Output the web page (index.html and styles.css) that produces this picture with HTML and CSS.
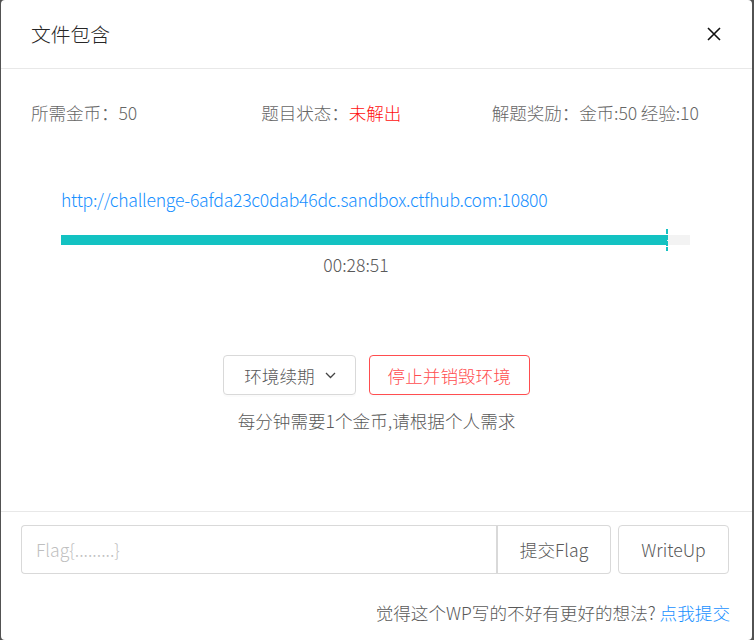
FILE: index.html
```html
<!DOCTYPE html>
<html lang="zh">
<head>
<meta charset="utf-8">
<title>文件包含</title>
<link rel="stylesheet" href="styles.css">
</head>
<body>
<div class="modal">
  <div class="modal-header">
    <div class="modal-title">文件包含</div>
    <svg class="close" width="14" height="14" viewBox="0 0 14 14"><path d="M1 1L13 13M13 1L1 13" stroke="#111" stroke-width="1.6" fill="none"/></svg>
  </div>
  <div class="modal-body">
    <div class="info">
      <div class="info-col">所需金币：50</div>
      <div class="info-col">题目状态：<span class="red">未解出</span></div>
      <div class="info-col">解题奖励：金币:50 经验:10</div>
    </div>
    <div class="url">http://challenge-6afda23c0dab46dc.sandbox.ctfhub.com:10800</div>
    <div class="progress">
      <div class="track">
        <div class="fill" style="width: 96.4%"></div>
        <div class="marker" style="left: 96.4%"></div>
      </div>
    </div>
    <div class="time">00:28:51</div>
    <div class="actions">
      <button class="btn">环境续期 <svg class="chev" width="11" height="7" viewBox="0 0 11 7"><path d="M1 1L5.5 5.5L10 1" stroke="#444" stroke-width="1.3" fill="none"/></svg></button>
      <button class="btn btn-danger">停止并销毁环境</button>
    </div>
    <div class="note">每分钟需要1个金币,请根据个人需求</div>
  </div>
  <div class="modal-footer">
    <div class="flag-row">
      <div class="input-group">
        <div class="input">Flag{.........}</div>
        <div class="addon">提交Flag</div>
      </div>
      <div class="btn-wu">WriteUp</div>
    </div>
    <div class="feedback">觉得这个WP写的不好有更好的想法? <span class="link">点我提交</span></div>
  </div>
</div>
</body>
</html>
```

FILE: styles.css
```css
html, body {
  margin: 0;
  padding: 0;
}
body {
  background: #525252;
  width: 754px;
  height: 640px;
  overflow: hidden;
  font-family: "Noto Sans CJK SC", "Noto Sans", sans-serif;
  font-size: 17.6px;
  font-weight: 300;
  color: #666;
}
.modal {
  margin-left: 1px;
  width: 751px;
  height: 640px;
  background: #fff;
  border-radius: 4px;
  display: flex;
  flex-direction: column;
}
.modal-header {
  height: 68px;
  border-bottom: 1px solid #e8e8e8;
  display: flex;
  align-items: center;
  justify-content: space-between;
  padding: 0 30px 0 30px;
  box-sizing: content-box;
}
.modal-title {
  font-size: 19.8px;
  color: #262626;
  line-height: 28px;
}
.close {
  display: block;
  margin-right: 1px;
}
.modal-body {
  height: 442px;
  padding-top: 31px;
  box-sizing: border-box;
}
.info {
  display: grid;
  grid-template-columns: repeat(3, 1fr);
  padding: 0 30px;
  line-height: 26px;
  letter-spacing: -0.1px;
}
.red {
  color: #ff1010;
}
.url {
  margin-top: 61px;
  padding-left: 60px;
  line-height: 26px;
  color: #1890ff;
  letter-spacing: -0.26px;
}
.progress {
  margin-top: 22px;
  padding: 0 62px 0 60px;
  height: 10px;
}
.track {
  position: relative;
  height: 10px;
  background: #f3f3f3;
}
.fill {
  height: 10px;
  background: #13c2c2;
}
.marker {
  position: absolute;
  top: -6px;
  width: 2px;
  height: 22px;
  margin-left: -1px;
  background: repeating-linear-gradient(#13c2c2 0 5px, transparent 5px 6px, #13c2c2 6px);
}
.time {
  margin-top: 7px;
  padding: 0 101px 0 60px;
  text-align: center;
  line-height: 26px;
  color: #595959;
}
.actions {
  margin-top: 77px;
  display: flex;
  justify-content: center;
  gap: 13px;
}
.btn {
  font: inherit;
  height: 40px;
  box-sizing: border-box;
  background: #fff;
  border: 1px solid #d9d9d9;
  border-radius: 4px;
  color: #595959;
  padding: 0 19px 0 20px;
  display: flex;
  align-items: center;
  box-shadow: 0 2px 0 rgba(0,0,0,0.015);
}
.chev {
  margin-left: 10px;
}
.btn-danger {
  border-color: #ff4d4f;
  color: #ff4d4f;
  padding: 0 18px;
}
.note {
  margin-top: 13px;
  text-align: center;
  line-height: 26px;
  color: #595959;
}
.modal-footer {
  border-top: 1px solid #e8e8e8;
  padding: 13px 22px 0 20px;
  flex: 1;
}
.flag-row {
  display: flex;
  gap: 7px;
}
.input-group {
  display: flex;
  width: 590px;
  height: 49px;
}
.input {
  flex: 1;
  border: 1px solid #d9d9d9;
  border-right: none;
  border-radius: 4px 0 0 4px;
  padding-left: 14px;
  color: #bfbfbf;
  display: flex;
  align-items: center;
}
.addon {
  width: 115px;
  box-sizing: border-box;
  border: 1px solid #d9d9d9;
  border-left: 2px solid #d9d9d9;
  border-radius: 0 4px 4px 0;
  color: #595959;
  display: flex;
  align-items: center;
  justify-content: center;
}
.btn-wu {
  width: 111px;
  height: 49px;
  box-sizing: border-box;
  border: 1px solid #d9d9d9;
  border-radius: 4px;
  color: #595959;
  display: flex;
  align-items: center;
  justify-content: center;
}
.feedback {
  margin-top: 26px;
  text-align: right;
  line-height: 26px;
  color: #595959;
}
.link {
  color: #1890ff;
}
```
